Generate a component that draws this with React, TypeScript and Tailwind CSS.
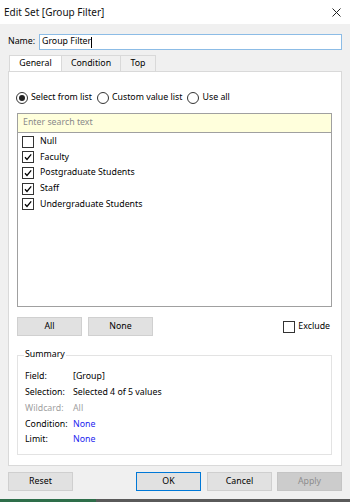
import React from "react";

const Check = ({ checked }: { checked: boolean }) => (
  <div className="w-[12px] h-[12px] border border-[#333333] bg-white flex items-center justify-center shrink-0">
    {checked && (
      <svg width="10" height="10" viewBox="0 0 10 10">
        <path d="M2 5.2 L4 7.4 L8.2 2.4" fill="none" stroke="#000" strokeWidth="1.3" />
      </svg>
    )}
  </div>
);

const Radio = ({ on }: { on: boolean }) => (
  <div className="w-[12px] h-[12px] rounded-full border border-[#333333] bg-white flex items-center justify-center shrink-0">
    {on && <div className="w-[6px] h-[6px] rounded-full bg-[#222222]" />}
  </div>
);

const Btn = ({ label, cls }: { label: string; cls: string }) => (
  <div className={"h-[19px] w-[65px] flex items-center justify-center " + cls}>{label}</div>
);

export default function App() {
  const items: [string, boolean][] = [
    ["Null", false],
    ["Faculty", true],
    ["Postgraduate Students", true],
    ["Staff", true],
    ["Undergraduate Students", true],
  ];
  return (
    <div
      className="w-[350px] h-[502px] bg-[#f0f0f0] overflow-hidden flex flex-col text-[8.8px] text-black"
      style={{ fontFamily: '"Noto Sans", "Open Sans", sans-serif' }}
    >
      {/* title bar */}
      <div className="h-[24px] bg-white flex items-center justify-between pl-[4px] pr-[9px]">
        <span className="text-[10px] text-[#111]">Edit Set [Group Filter]</span>
        <svg width="9" height="9" viewBox="0 0 9 9">
          <path d="M0.5 0.5 L8.5 8.5 M8.5 0.5 L0.5 8.5" stroke="#222" strokeWidth="1" />
        </svg>
      </div>

      {/* name row */}
      <div className="flex items-center mt-[10px] pl-[8px] pr-[8px] h-[16px]">
        <span className="w-[31px]">Name:</span>
        <div className="flex-1 h-[16px] bg-white border border-[#8cbce6] flex items-center pl-[2px]">
          Group Filter<span className="w-px h-[11px] bg-black" />
        </div>
      </div>

      {/* tabs */}
      <div className="flex mt-[5px] pl-[9px] h-[16px]">
        <div className="w-[53px] bg-white border-t border-l border-r border-[#d9d9d9] flex items-center justify-center">General</div>
        <div className="w-[59px] border-t border-r border-[#d9d9d9] flex items-center justify-center">Condition</div>
        <div className="w-[35px] border-t border-r border-[#d9d9d9] flex items-center justify-center">Top</div>
      </div>

      {/* panel */}
      <div className="ml-[8px] w-[334px] h-[395px] bg-white border border-[#d9d9d9] flex flex-col pl-[8px] pr-[10px]">
        <div className="flex items-center mt-[19px] h-[14px] gap-[3px] -ml-[1px]">
          <Radio on={true} />
          <span className="mr-[2px]">Select from list</span>
          <Radio on={false} />
          <span className="mr-[2px]">Custom value list</span>
          <Radio on={false} />
          <span>Use all</span>
        </div>

        <div className="mt-[8px] h-[194px] w-[315px] border border-[#a0a0a0] flex flex-col">
          <div className="h-[19px] bg-[#ffffdc] border-b border-[#a0a0a0] flex items-center pl-[5px] text-[#8a8a8a]">
            Enter search text
          </div>
          <div className="flex flex-col pt-[1px] pl-[4px]">
            {items.map(([label, c]) => (
              <div key={label} className="h-[15.6px] flex items-center gap-[6px]">
                <Check checked={c} />
                <span>{label}</span>
              </div>
            ))}
          </div>
        </div>

        <div className="mt-[10px] w-[315px] flex items-center">
          <Btn label="All" cls="bg-[#e1e1e1] border border-[#d0d0d0]" />
          <div className="w-[6px]" />
          <Btn label="None" cls="bg-[#e1e1e1] border border-[#d0d0d0]" />
          <div className="flex-1" />
          <div className="flex items-center gap-[3px] mr-[2px]">
            <Check checked={false} />
            <span>Exclude</span>
          </div>
        </div>

        {/* summary */}
        <div className="mt-[19px] w-[315px] h-[100px] border border-[#e3e3e3] relative flex flex-col pt-[13px] pl-[7px]">
          <span className="absolute left-[6px] top-[-8px] bg-white px-[1px]">Summary</span>
          {[
            ["Field:", "[Group]", "text-black", "text-black"],
            ["Selection:", "Selected 4 of 5 values", "text-black", "text-black"],
            ["Wildcard:", "All", "text-[#a0a0a0]", "text-[#a0a0a0]"],
            ["Condition:", "None", "text-black", "text-[#1c1cf0]"],
            ["Limit:", "None", "text-black", "text-[#1c1cf0]"],
          ].map(([a, b, ca, cb]) => (
            <div key={a} className="h-[15.8px] flex items-center">
              <span className={"w-[48px] " + ca}>{a}</span>
              <span className={cb}>{b}</span>
            </div>
          ))}
        </div>
      </div>

      {/* bottom buttons */}
      <div className="mt-[6px] flex items-center pl-[8px] pr-[8px]">
        <Btn label="Reset" cls="bg-[#e1e1e1] border border-[#cfcfcf]" />
        <div className="flex-1" />
        <Btn label="OK" cls="bg-[#e1e1e1] border border-[#0078d7]" />
        <div className="w-[6px]" />
        <Btn label="Cancel" cls="bg-[#e1e1e1] border border-[#cfcfcf]" />
        <div className="w-[5px]" />
        <Btn label="Apply" cls="bg-[#cccccc] border border-[#c4c4c4] text-[#8c8c8c]" />
      </div>

      <div className="flex-1" />
      <div className="h-[3px] flex">
        <div className="w-[96px] bg-[#2e6e4a]" />
        <div className="flex-1 bg-[#5a5a5a]" />
      </div>
    </div>
  );
}
